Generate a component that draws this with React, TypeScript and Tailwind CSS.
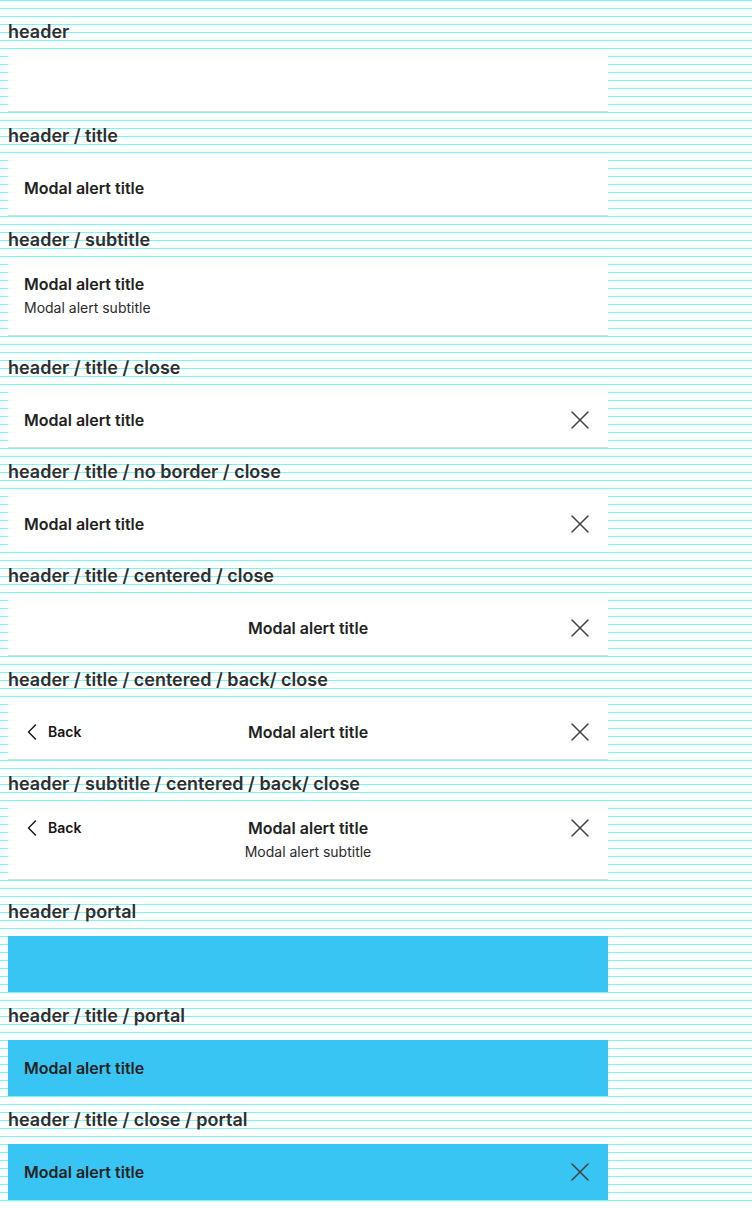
import React from "react";

const CloseIcon = () => (
  <svg width="24" height="24" viewBox="0 0 24 24" fill="none" className="shrink-0">
    <path d="M4 4L20 20M20 4L4 20" stroke="#3f3f3f" strokeWidth="1.5" strokeLinecap="round" />
  </svg>
);

const BackButton = () => (
  <div className="flex h-6 items-center">
    <svg width="10" height="16" viewBox="0 0 10 16" fill="none" className="ml-[3px]">
      <path d="M8.5 1L1.5 8L8.5 15" stroke="#1a1a1a" strokeWidth="1.5" strokeLinecap="round" strokeLinejoin="round" />
    </svg>
    <span className="ml-[11px] text-[14px] leading-6 font-semibold text-[#151515]">Back</span>
  </div>
);

const Label = ({ children }: { children: React.ReactNode }) => (
  <div className="h-[41px] pt-[12px]">
    <span className="block text-[18px] leading-6 font-semibold text-[#2e2e2e]">{children}</span>
  </div>
);

const Title = () => (
  <div className="text-[16px] leading-6 font-semibold text-[#222]">Modal alert title</div>
);

const Subtitle = () => (
  <div className="mt-[2px] text-[14px] leading-5 text-[#2a2a2a]">Modal alert subtitle</div>
);

const Box = ({ children, tall, noBorder }: { children?: React.ReactNode; tall?: boolean; noBorder?: boolean }) => (
  <div
    className={
      (tall ? "h-[79px] pt-[15px] mb-2 " : "h-[63px] pt-[23px] ") +
      (noBorder ? "" : "border-b border-[#dadada] ") +
      "w-[600px] bg-white px-4"
    }
  >
    {children}
  </div>
);

const Portal = ({ children }: { children?: React.ReactNode }) => (
  <div className="mt-[7px] flex h-14 w-[600px] items-center justify-between bg-[#39c5f3] px-4">{children}</div>
);

export default function App() {
  return (
    <div
      className="min-h-[1208px] w-full bg-[image:repeating-linear-gradient(to_bottom,#78f6f6_0px,#78f6f6_1px,#ffffff_1px,#ffffff_8px)] px-2 pt-2"
      style={{ fontFamily: "Inter, 'Noto Sans', sans-serif" }}
    >
      <Label>header</Label>
      <Box />

      <Label>header / title</Label>
      <Box>
        <Title />
      </Box>

      <Label>header / subtitle</Label>
      <Box tall>
        <Title />
        <Subtitle />
      </Box>

      <Label>header / title / close</Label>
      <Box>
        <div className="flex items-center justify-between">
          <Title />
          <CloseIcon />
        </div>
      </Box>

      <Label>header / title / no border / close</Label>
      <Box noBorder>
        <div className="flex items-center justify-between">
          <Title />
          <CloseIcon />
        </div>
      </Box>

      <Label>header / title / centered / close</Label>
      <Box>
        <div className="grid grid-cols-[1fr_auto_1fr] items-center">
          <div />
          <Title />
          <div className="flex justify-end">
            <CloseIcon />
          </div>
        </div>
      </Box>

      <Label>header / title / centered / back/ close</Label>
      <Box>
        <div className="grid grid-cols-[1fr_auto_1fr] items-center">
          <BackButton />
          <Title />
          <div className="flex justify-end">
            <CloseIcon />
          </div>
        </div>
      </Box>

      <Label>header / subtitle / centered / back/ close</Label>
      <Box tall>
        <div className="grid grid-cols-[1fr_auto_1fr] items-start">
          <BackButton />
          <div className="flex flex-col items-center">
            <Title />
            <Subtitle />
          </div>
          <div className="flex justify-end">
            <CloseIcon />
          </div>
        </div>
      </Box>

      <Label>header / portal</Label>
      <Portal />

      <Label>header / title / portal</Label>
      <Portal>
        <Title />
      </Portal>

      <Label>header / title / close / portal</Label>
      <Portal>
        <Title />
        <CloseIcon />
      </Portal>
    </div>
  );
}
